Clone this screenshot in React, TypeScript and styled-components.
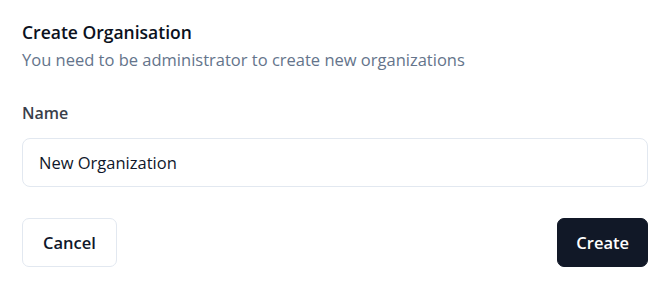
import styled, { createGlobalStyle } from 'styled-components';

const GlobalStyle = createGlobalStyle`
  body {
    margin: 0;
    background: #ffffff;
    font-family: 'Open Sans', 'Noto Sans', sans-serif;
  }
`;

const App = () => {
  return (
    <>
      <GlobalStyle />
      <Form onSubmit={(e) => e.preventDefault()}>
        <Header>
          <Title>Create Organisation</Title>
          <Description>You need to be administrator to create new organizations</Description>
        </Header>
        <Field>
          <Label htmlFor="org-name">Name</Label>
          <Input id="org-name" defaultValue="New Organization" />
        </Field>
        <Actions>
          <Button type="button">Cancel</Button>
          <Button type="submit" $primary>
            Create
          </Button>
        </Actions>
      </Form>
    </>
  );
};

export default App;

const Form = styled.form`
  box-sizing: border-box;
  width: 666px;
  padding: 19px 18px 0 22px;
  display: flex;
  flex-direction: column;
`;

const Header = styled.div`
  display: flex;
  flex-direction: column;
  gap: 4px;
`;

const Title = styled.h2`
  margin: 0;
  font-size: 17.5px;
  line-height: 26px;
  font-weight: 600;
  color: #0b1120;
`;

const Description = styled.p`
  margin: 0;
  font-size: 16.5px;
  line-height: 22px;
  color: #64748b;
`;

const Field = styled.div`
  margin-top: 32px;
  display: flex;
  flex-direction: column;
  gap: 15px;
`;

const Label = styled.label`
  font-size: 16px;
  line-height: 20px;
  font-weight: 600;
  color: #3a3f4a;
`;

const Input = styled.input`
  box-sizing: border-box;
  width: 100%;
  height: 49px;
  padding: 0 16px;
  border: 1px solid #e2e8f0;
  border-radius: 8px;
  font-family: inherit;
  font-size: 16.5px;
  color: #0f172a;
  outline: none;
`;

const Actions = styled.div`
  margin-top: 31px;
  display: flex;
  justify-content: space-between;
`;

const Button = styled.button<{ $primary?: boolean }>`
  box-sizing: border-box;
  height: 49px;
  padding: 0 ${({ $primary }) => ($primary ? '18px' : '20px')};
  border-radius: 7px;
  border: 1px solid ${({ $primary }) => ($primary ? '#111827' : '#e2e8f0')};
  background: ${({ $primary }) => ($primary ? '#111827' : '#ffffff')};
  color: ${({ $primary }) => ($primary ? '#ffffff' : '#0f172a')};
  font-family: inherit;
  font-size: 16.5px;
  font-weight: 600;
  cursor: pointer;
`;
